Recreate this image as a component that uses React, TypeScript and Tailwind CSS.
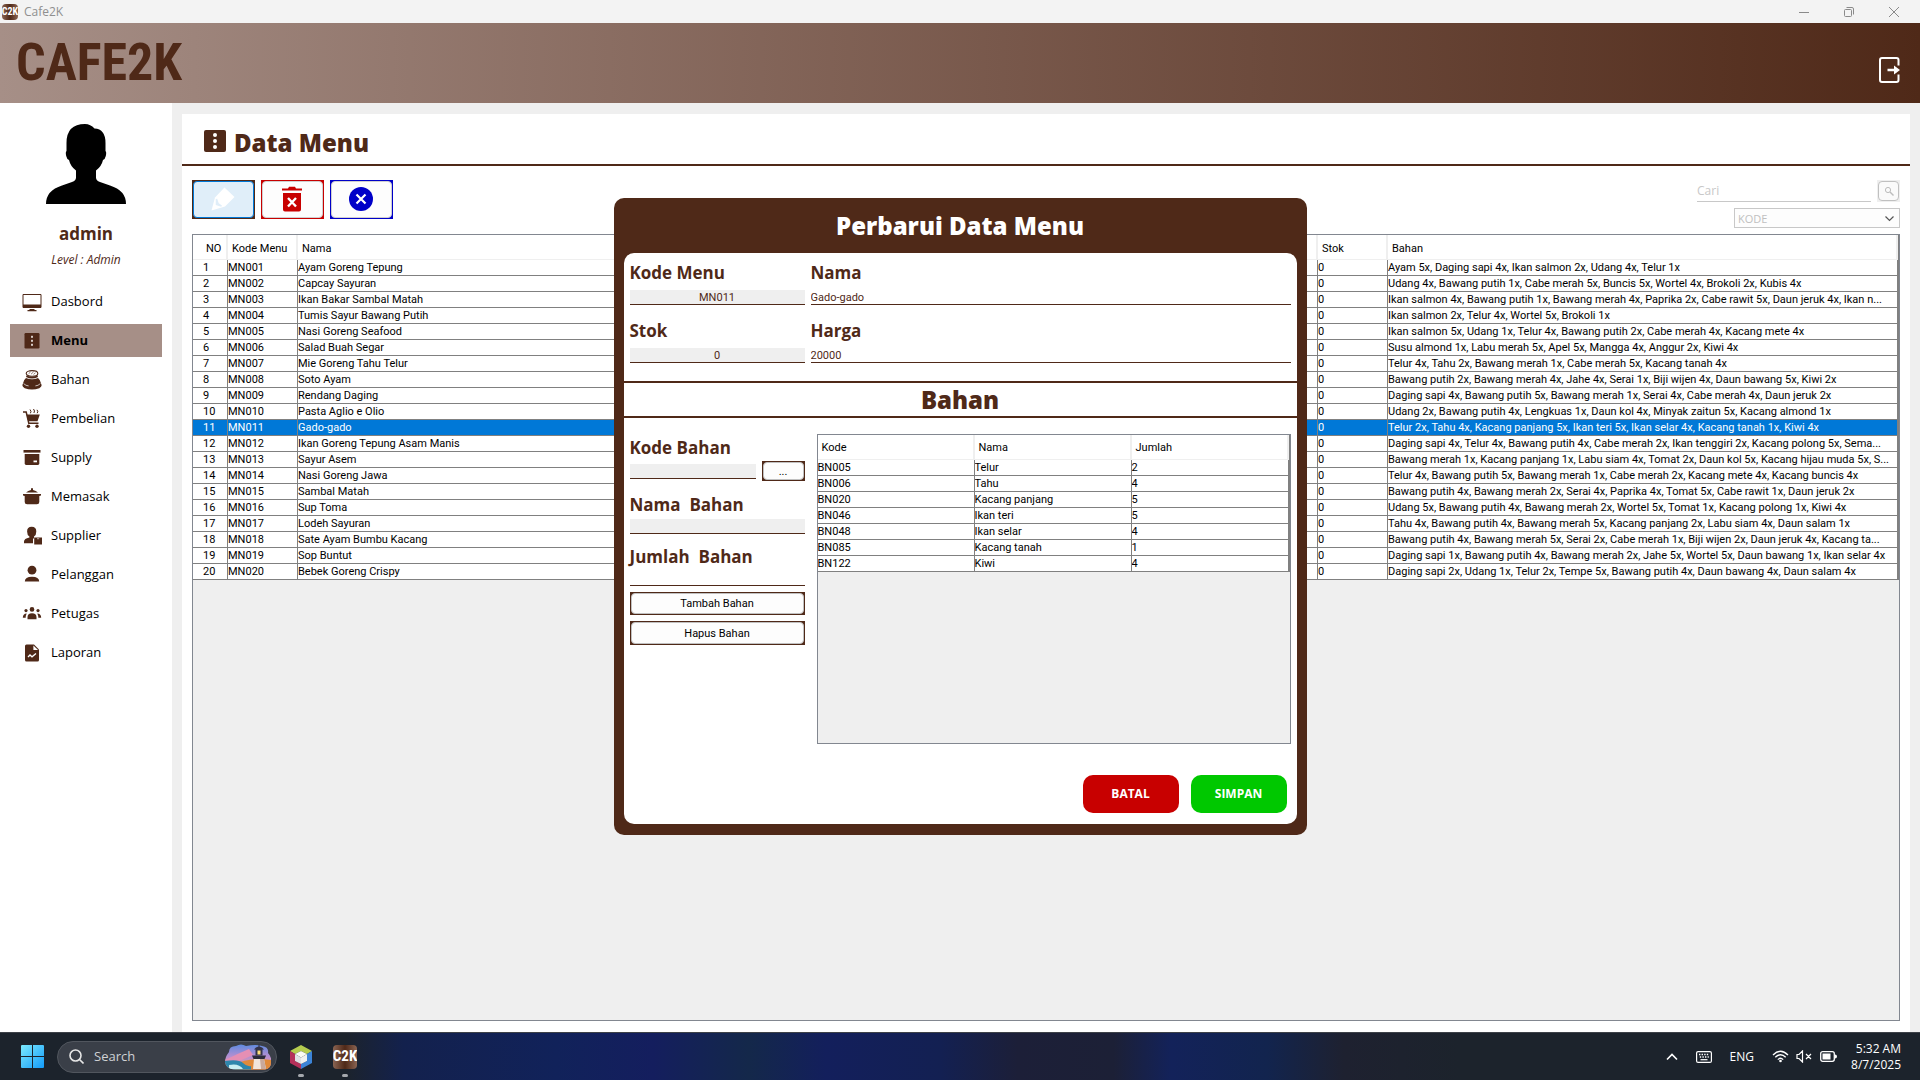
import React from 'react';

const TABLE_FONT = "font-['Roboto','Liberation_Sans',sans-serif]";
const HEAVY_FONT = "font-['Noto_Sans','Open_Sans',sans-serif] font-black";

type Row = [name: string, ingredients: string];

const rows: Row[] = [
  ['Ayam Goreng Tepung', 'Ayam 5x, Daging sapi 4x, Ikan salmon 2x, Udang 4x, Telur 1x'],
  ['Capcay Sayuran', 'Udang 4x, Bawang putih 1x, Cabe merah 5x, Buncis 5x, Wortel 4x, Brokoli 2x, Kubis 4x'],
  ['Ikan Bakar Sambal Matah', 'Ikan salmon 4x, Bawang putih 1x, Bawang merah 4x, Paprika 2x, Cabe rawit 5x, Daun jeruk 4x, Ikan n...'],
  ['Tumis Sayur Bawang Putih', 'Ikan salmon 2x, Telur 4x, Wortel 5x, Brokoli 1x'],
  ['Nasi Goreng Seafood', 'Ikan salmon 5x, Udang 1x, Telur 4x, Bawang putih 2x, Cabe merah 4x, Kacang mete 4x'],
  ['Salad Buah Segar', 'Susu almond 1x, Labu merah 5x, Apel 5x, Mangga 4x, Anggur 2x, Kiwi 4x'],
  ['Mie Goreng Tahu Telur', 'Telur 4x, Tahu 2x, Bawang merah 1x, Cabe merah 5x, Kacang tanah 4x'],
  ['Soto Ayam', 'Bawang putih 2x, Bawang merah 4x, Jahe 4x, Serai 1x, Biji wijen 4x, Daun bawang 5x, Kiwi 2x'],
  ['Rendang Daging', 'Daging sapi 4x, Bawang putih 5x, Bawang merah 1x, Serai 4x, Cabe merah 4x, Daun jeruk 2x'],
  ['Pasta Aglio e Olio', 'Udang 2x, Bawang putih 4x, Lengkuas 1x, Daun kol 4x, Minyak zaitun 5x, Kacang almond 1x'],
  ['Gado-gado', 'Telur 2x, Tahu 4x, Kacang panjang 5x, Ikan teri 5x, Ikan selar 4x, Kacang tanah 1x, Kiwi 4x'],
  ['Ikan Goreng Tepung Asam Manis', 'Daging sapi 4x, Telur 4x, Bawang putih 4x, Cabe merah 2x, Ikan tenggiri 2x, Kacang polong 5x, Sema...'],
  ['Sayur Asem', 'Bawang merah 1x, Kacang panjang 1x, Labu siam 4x, Tomat 2x, Daun kol 5x, Kacang hijau muda 5x, S...'],
  ['Nasi Goreng Jawa', 'Telur 4x, Bawang putih 5x, Bawang merah 1x, Cabe merah 2x, Kacang mete 4x, Kacang buncis 4x'],
  ['Sambal Matah', 'Bawang putih 4x, Bawang merah 2x, Serai 4x, Paprika 4x, Tomat 5x, Cabe rawit 1x, Daun jeruk 2x'],
  ['Sup Toma', 'Udang 5x, Bawang putih 4x, Bawang merah 2x, Wortel 5x, Tomat 1x, Kacang polong 1x, Kiwi 4x'],
  ['Lodeh Sayuran', 'Tahu 4x, Bawang putih 4x, Bawang merah 5x, Kacang panjang 2x, Labu siam 4x, Daun salam 1x'],
  ['Sate Ayam Bumbu Kacang', 'Bawang putih 4x, Bawang merah 5x, Serai 2x, Cabe merah 1x, Biji wijen 2x, Daun jeruk 4x, Kacang ta...'],
  ['Sop Buntut', 'Daging sapi 1x, Bawang putih 4x, Bawang merah 2x, Jahe 5x, Wortel 5x, Daun bawang 1x, Ikan selar 4x'],
  ['Bebek Goreng Crispy', 'Daging sapi 2x, Udang 1x, Telur 2x, Tempe 5x, Bawang putih 4x, Daun bawang 4x, Daun salam 4x'],
];

const bahan = [
  ['BN005', 'Telur', '2'],
  ['BN006', 'Tahu', '4'],
  ['BN020', 'Kacang panjang', '5'],
  ['BN046', 'Ikan teri', '5'],
  ['BN048', 'Ikan selar', '4'],
  ['BN085', 'Kacang tanah', '1'],
  ['BN122', 'Kiwi', '4'],
];

const B = '#4f2918';

/* Sidebar icons, drawn on a 20 by 20 grid */
const icons: Record<string, React.ReactNode> = {
  Dasbord: (
    <>
      <path d="M1 2.5h18v13H1z" fill="none" stroke={B} strokeWidth="1" />
      <path d="M1 12.5h18v3H1zM7.5 17h5v1h2v1.2h-9V18h2z" fill={B} />
    </>
  ),
  Menu: (
    <>
      <rect x="2.5" y="2" width="15" height="15.5" rx="1.2" fill={B} />
      <g fill="#d8cdc8">
        <rect x="9" y="4.8" width="2" height="2" /><rect x="9" y="8.8" width="2" height="2" /><rect x="9" y="12.8" width="2" height="2" />
      </g>
    </>
  ),
  Bahan: (
    <>
      <ellipse cx="10" cy="3.4" rx="5.8" ry="2.8" fill="#fff" stroke={B} strokeWidth="1.1" />
      <path d="M6.500 3.800l2-1.800M9 4.200l2.600-2.400M11.500 4.400l2-1.600" stroke={B} strokeWidth=".6" />
      <path d="M4.600 5.200q5.400 3 10.800 0l.6 1.700q-6 3-12 0z" fill={B} />
      <path d="M4 8q6 2.600 12 0 2.200 2 2.600 4.200L19.600 15q.3 1.800-2.300 3.200-7.300 2.800-14.600 0Q.1 16.800.4 15l1-2.800Q1.800 10 4 8z" fill={B} />
      <path d="M1.600 13.600q2.400 2.300 5 2.300M18.400 13.600q-2.400 2.300-5 2.300" fill="none" stroke="#fff" strokeWidth=".7" />
    </>
  ),
  Pembelian: (
    <>
      <path d="M1 3h3.200l2.600 11.300h9.700" fill="none" stroke={B} strokeWidth="1.5" />
      <path d="M4.500 5.500h13.300l-2.300 6.700H6.200z" fill={B} />
      <path d="M8 .5l1 2-.6 1.800M11.500 0l1 2-.6 2M15 .8l.8 1.800-.6 1.600" fill="none" stroke={B} strokeWidth="1" />
      <circle cx="6.500" cy="17.300" r="1.700" fill={B} /><circle cx="15" cy="17.300" r="1.700" fill={B} />
    </>
  ),
  Supply: (
    <>
      <path d="M1.500 2h17v2.600h-17z" fill={B} />
      <path d="M2.700 6h14.600v9.600q0 1.400-1.400 1.400H4.100q-1.400 0-1.400-1.400z" fill={B} />
      <rect x="11.500" y="12.500" width="3.500" height="1.800" fill="#fff" />
    </>
  ),
  Memasak: (
    <>
      <path d="M4 5.600Q6 3.500 9 3V1.200h2V3q3 .5 5 2.600z" fill={B} />
      <path d="M1 6.900h18v1.500l-1.700.6v6q0 2.300-2.400 2.300H5.100q-2.400 0-2.400-2.300V9L1 8.400z" fill={B} />
    </>
  ),
  Supplier: (
    <>
      <path d="M9.700.8q4.600 0 4.600 4.600 0 3.600-2.300 5v2H11v4.800H2v-1.600q0-2.800 5.400-4V10.400Q5.100 9 5.100 5.400 5.100.8 9.700.8z" fill={B} />
      <path d="M12.200 11.500H20v7h-7.800z" fill={B} /><path d="M15 11.500h2.200v1.800H15z" fill="#a68f87" />
    </>
  ),
  Pelanggan: (
    <>
      <circle cx="10" cy="5.200" r="4.400" fill={B} />
      <path d="M2.800 16.500q0-4.700 7.200-4.700t7.200 4.700z" fill={B} />
    </>
  ),
  Petugas: (
    <g fill={B}>
      <circle cx="10" cy="5.400" r="2.300" /><circle cx="4" cy="6.600" r="1.600" /><circle cx="16" cy="6.600" r="1.600" />
      <path d="M5.500 15.200v-2q0-4 4.500-4t4.500 4v2zM.8 13.800q0-4 3.900-4.200Q3.700 11.500 3.700 13.800zM19.200 13.800q0-4-3.900-4.200 1 1.900 1 4.200z" />
    </g>
  ),
  Laporan: (
    <>
      <path d="M4.500 1.500H12l5 5V17q0 1.500-1.500 1.500h-11Q3 18.500 3 17V3q0-1.500 1.500-1.500z" fill={B} />
      <path d="M11.400 2.500v4.600H16z" fill="#fff" />
      <path d="M6 14l2-2 2 1.800 4-3.300" fill="none" stroke="#fff" strokeWidth="1.300" />
    </>
  ),
};

function TitleBar() {
  return (
    <div className="flex h-[23px] shrink-0 items-center bg-[#f3f3f3] pl-0.5 text-[12px] text-[#8f8f8f]">
      <C2K small />
      <span className="ml-1.5 flex-1">Cafe2K</span>
      <button aria-label="Minimize" className="flex w-[45px] justify-center">
        <svg width="12" height="12" viewBox="0 0 12 12"><path d="M1 6.500h10" stroke="#8a8a8a" /></svg>
      </button>
      <button aria-label="Restore" className="flex w-[45px] justify-center">
        <svg width="12" height="12" viewBox="0 0 12 12" fill="none" stroke="#8a8a8a"><rect x="1.500" y="3.500" width="7" height="7" rx="1" /><path d="M3.500 1.500h5.500q1.500 0 1.500 1.500v5.500" /></svg>
      </button>
      <button aria-label="Close" className="mr-1 flex w-[45px] justify-center">
        <svg width="12" height="12" viewBox="0 0 12 12"><path d="M1 1l10 10M11 1L1 11" stroke="#8a8a8a" /></svg>
      </button>
    </div>
  );
}

function C2K({ small }: { small?: boolean }) {
  return (
    <span
      className={
        "flex items-center justify-center overflow-hidden rounded-sm bg-linear-to-r from-[#8b6553] via-[#4f2918] to-[#8b6553] font-['Roboto_Condensed','Roboto',sans-serif] font-bold text-white " +
        (small ? 'h-4 w-4 text-[10px] leading-none' : 'h-6 w-6 text-[15px] leading-none')
      }
    >
      C2K
    </span>
  );
}

function Sidebar() {
  return (
    <aside className="flex w-[172px] shrink-0 flex-col items-center bg-white pt-[21px] text-[#4f2918]">
      <svg width="80" height="80" viewBox="0 0 80 80">
        <path d="M39 0q5.500 0 9.500 4.500Q59.500 5 59.500 19v8q1.200 1 .3 5-.8 3.500-2.800 4-1.500 6.500-7 10.500v7q0 3 4 4.500l10 3.500q16 5 16 18.500H0q0-13.500 16-18.500l10-3.500q4-1.500 4-4.500v-7Q24.500 42.500 23 36q-2-.5-2.800-4-.9-4 .3-5v-8Q20.500 0 39 0z" fill="#000" />
      </svg>
      <div className="mt-[18px] text-[17px] leading-6 font-bold">admin</div>
      <div className="mt-1 text-[12px] leading-5 italic">Level : Admin</div>
      <nav className="mt-[15px] flex w-full flex-col gap-1.5 px-2.5 text-black">
        {Object.keys(icons).map((n) => (
          <a
            key={n}
            href="#"
            className={'flex h-[33px] items-center gap-[9px] pl-3 text-[13px] ' + (n === 'Menu' ? 'bg-[#a68f87] font-bold' : '')}
          >
            <svg width="20" height="20" viewBox="0 0 20 20">{icons[n]}</svg>
            {n}
          </a>
        ))}
      </nav>
    </aside>
  );
}

function ToolButton({ label, frame, face, children }: { label: string; frame: string; face: string; children: React.ReactNode }) {
  return (
    <button aria-label={label} className={'h-[39px] w-[63px] p-px ' + frame}>
      <span className={'flex h-full items-center justify-center rounded-sm border pr-px pb-px ' + face}>{children}</span>
    </button>
  );
}

function Toolbar() {
  return (
    <div className="mb-1.5 flex items-start gap-1.5">
      <ToolButton label="Ubah" frame="bg-[#4f2918]" face="border-[#0078d7] bg-[#e0eef9]">
        <svg width="26" height="26" viewBox="0 0 26 26">
          <path d="M1.500 24.500L5 11.500 14.500 1.500 24.500 11 15 20.500z" fill="#fff" />
          <path d="M6.500 13v5.500l5 1.500-3.500-2.500z" fill="#e0eef9" stroke="#e0eef9" strokeWidth="1.500" />
        </svg>
      </ToolButton>
      <ToolButton label="Hapus" frame="bg-[#c80000]" face="border-[#d0d0d0] bg-[#fdfdfd]">
        <svg width="20" height="26" viewBox="0 0 20 26">
          <path d="M0 2.500h6L7 .8h6l1 1.700h6v2H0zM1 7h18v16.500q0 2-2 2H3q-2 0-2-2z" fill="#c80000" />
          <path d="M6 12l8 8.500M14 12l-8 8.500" stroke="#fff" strokeWidth="2.400" />
        </svg>
      </ToolButton>
      <ToolButton label="Batal" frame="bg-[#0000c8]" face="border-[#d0d0d0] bg-[#fdfdfd]">
        <svg width="24" height="24" viewBox="0 0 24 24">
          <circle cx="12" cy="12" r="12" fill="#0000c8" />
          <path d="M7.500 7.500l9 9M16.500 7.500l-9 9" stroke="#fff" strokeWidth="2.200" />
        </svg>
      </ToolButton>
      <div className="ml-auto flex flex-col items-end gap-1.5">
        <div className="flex gap-1.5">
          <input
            aria-label="Cari"
            placeholder="Cari"
            disabled
            className="h-[22px] w-[174px] border-b border-[#c8c8c8] text-[12px] placeholder:text-[#c8c8c8]"
          />
          <button aria-label="Cari data" className="h-[22px] w-[23px] bg-[#efefef] p-px">
            <span className="flex h-full items-center justify-center rounded-sm border border-[#c0c0c0] bg-[#fafafa]">
              <svg width="10" height="10" viewBox="0 0 10 10" fill="none" stroke="#bcbcbc"><circle cx="4" cy="4" r="2.600" /><path d="M6 6l3.500 3.500" strokeWidth="1.400" /></svg>
            </span>
          </button>
        </div>
        <div className="relative">
          <select aria-label="Kolom" disabled className="block h-5 w-[166px] appearance-none border border-[#c8c8c8] bg-[#fdfdfd] pt-px pl-[3px] text-[11px] leading-4 text-[#c0c0c0] opacity-100">
            <option>KODE</option>
          </select>
          <svg className="absolute top-2 right-1.5" width="9" height="6" viewBox="0 0 9 6"><path d="M.5 .5l4 4 4-4" fill="none" stroke="#555" strokeWidth="1.200" /></svg>
        </div>
      </div>
    </div>
  );
}

const th = 'overflow-hidden border-r-2 border-b border-[#efefef] pt-0.5 text-left font-normal whitespace-nowrap';
const td = 'overflow-hidden border-r border-b border-[#808080] whitespace-nowrap';

function MenuTable() {
  return (
    <div className="flex-1 border border-[#828790] bg-[#efefef]">
      <table className={'w-full table-fixed border-separate border-spacing-0 border-r border-[#808080] bg-white text-[11px] leading-[15px] text-black ' + TABLE_FONT}>
        <colgroup>
          <col className="w-[35px]" />
          <col className="w-[70px]" />
          <col />
          <col className="w-[70px]" />
          <col className="w-[510px]" />
        </colgroup>
        <thead>
          <tr className="h-[25px]">
            <th className={th + ' pl-[13px]'}>NO</th>
            <th className={th + ' pl-1'}>Kode Menu</th>
            <th className={th + ' pl-1'}>Nama</th>
            <th className={th + ' pl-1'}>Stok</th>
            <th className={th + ' pl-1'}>Bahan</th>
          </tr>
        </thead>
        <tbody>
          {rows.map(([name, text], i) => (
            <tr key={name} className={i === 10 ? 'h-4 bg-[#0078d7] text-white' : 'h-4'}>
              <td className={td + ' pl-2.5'}>{i + 1}</td>
              <td className={td}>{'MN0' + String(i + 1).padStart(2, '0')}</td>
              <td className={td}>{name}</td>
              <td className={td}>0</td>
              <td className={td}>{text}</td>
            </tr>
          ))}
        </tbody>
      </table>
    </div>
  );
}

const label = 'block h-6 text-[17px] leading-6 font-bold whitespace-pre';
const input = 'block h-[15px] w-full border-b border-[#4f2918] pt-px text-[11px] leading-3 ' + TABLE_FONT;

function SmallButton({ size, children, ...rest }: { size: string; children: React.ReactNode; 'aria-label'?: string }) {
  return (
    <button type="button" {...rest} className={'bg-[#4f2918] p-px text-[11px] text-black ' + TABLE_FONT + ' ' + size}>
      <span className="flex h-full items-center justify-center rounded-sm border border-[#c0c0c0] bg-[#fdfdfd] pt-px leading-none">{children}</span>
    </button>
  );
}

function Dialog() {
  return (
    <div className="absolute inset-0 flex items-center justify-center">
      <section role="dialog" aria-labelledby="dialog-title" className="w-[693px] rounded-[10px] bg-[#4f2918] px-2.5 pb-[11px] text-[#4f2918]">
        <h2 id="dialog-title" className={'h-[55px] text-center text-[24px] leading-[56px] text-white ' + HEAVY_FONT}>Perbarui Data Menu</h2>
        <form className="rounded-[10px] bg-white pb-[11px]">
          <div className="grid grid-cols-[175px_1fr] gap-x-1.5 gap-y-3.5 px-1.5 pt-2 pb-[18px]">
            <div>
              <label htmlFor="kode" className={label}>Kode Menu</label>
              <input id="kode" readOnly defaultValue="MN011" className={input + ' mt-[5px] bg-[#efefef] text-center'} />
            </div>
            <div>
              <label htmlFor="nama" className={label}>Nama</label>
              <input id="nama" defaultValue="Gado-gado" className={input + ' mt-[5px]'} />
            </div>
            <div>
              <label htmlFor="stok" className={label}>Stok</label>
              <input id="stok" readOnly defaultValue="0" className={input + ' mt-[5px] bg-[#efefef] text-center'} />
            </div>
            <div>
              <label htmlFor="harga" className={label}>Harga</label>
              <input id="harga" defaultValue="20000" className={input + ' mt-[5px]'} />
            </div>
          </div>
          <h3 className={'h-[37px] border-y-2 border-[#4f2918] text-center text-[24px] leading-[34px] ' + HEAVY_FONT}>Bahan</h3>
          <div className="grid grid-cols-[175px_1fr] gap-x-3 px-1.5 pt-4">
            <div className="pt-0.5">
              <label htmlFor="kodeBahan" className={label}>Kode Bahan</label>
              <div className="mt-px flex items-end gap-1.5">
                <div className="flex-1 pb-0.5">
                  <input id="kodeBahan" readOnly className={input + ' bg-[#efefef]'} />
                </div>
                <SmallButton aria-label="Pilih bahan" size="h-5 w-[43px]">...</SmallButton>
              </div>
              <label htmlFor="namaBahan" className={label + ' mt-3'}>{'Nama  Bahan'}</label>
              <input id="namaBahan" readOnly className={input + ' mt-0.5 bg-[#efefef]'} />
              <label htmlFor="jumlahBahan" className={label + ' mt-[11px]'}>{'Jumlah  Bahan'}</label>
              <input id="jumlahBahan" className={input + ' mt-0.5'} />
              <div className="mt-1.5 flex flex-col gap-1.5">
                <SmallButton size="h-[23px]">Tambah Bahan</SmallButton>
                <SmallButton size="h-6">Hapus Bahan</SmallButton>
              </div>
            </div>
            <div className="h-[310px] border border-[#828790] bg-[#efefef]">
              <table className={'w-full table-fixed border-separate border-spacing-0 border-r border-[#808080] bg-white text-[11px] leading-[15px] text-black ' + TABLE_FONT}>
                <thead>
                  <tr className="h-[25px]">
                    <th className={th + ' pl-1'}>Kode</th>
                    <th className={th + ' pl-1'}>Nama</th>
                    <th className={th + ' pl-1'}>Jumlah</th>
                  </tr>
                </thead>
                <tbody>
                  {bahan.map((r) => (
                    <tr key={r[0]} className="h-4">
                      {r.map((c, i) => <td key={i} className={td}>{c}</td>)}
                    </tr>
                  ))}
                </tbody>
              </table>
            </div>
          </div>
          <div className="mt-[31px] flex justify-end gap-3 px-2.5 text-[12px] font-bold text-white">
            <button type="button" className="h-[38px] w-24 rounded-[10px] bg-[#c80000]">BATAL</button>
            <button type="button" className="h-[38px] w-24 rounded-[10px] bg-[#00c800]">SIMPAN</button>
          </div>
        </form>
      </section>
    </div>
  );
}

function Taskbar() {
  return (
    <footer className="flex h-12 shrink-0 items-center border-t border-[#3d4148] bg-[linear-gradient(90deg,#1c232c_0%,#1c232c_18%,#13214d_21%,#11225a_29%,#141e5e_34%,#14284a_39%,#131f5c_43%,#132052_49%,#1c1f38_53%,#1c2036_58%,#13225a_61%,#12244e_66%,#1e2130_70%,#1c232c_76%)] pr-[19px] pl-[21px] text-white">
      <button aria-label="Start">
        <svg width="23" height="23" viewBox="0 0 23 23">
          <defs><linearGradient id="win" gradientUnits="userSpaceOnUse" x1="0" y1="0" x2="23" y2="23"><stop offset="0" stopColor="#7ceafd" /><stop offset="1" stopColor="#139bfa" /></linearGradient></defs>
          <path d="M0 1q0-1 1-1h10v11H0zM12 0h10q1 0 1 1v10H12zM0 12h11v11H1q-1 0-1-1zM12 12h11v10q0 1-1 1H12z" fill="url(#win)" />
        </svg>
      </button>
      <div className="ml-[13px] flex h-8 w-[220px] items-center rounded-full border border-[#51565e] bg-[#3a3f48] pr-[5px] pl-[11px]">
        <svg width="15" height="15" viewBox="0 0 15 15" fill="none" stroke="#e6e6e6" strokeWidth="1.600"><circle cx="6.500" cy="6.500" r="5.500" /><path d="M10.500 10.500l4 4" /></svg>
        <input aria-label="Search" placeholder="Search" className="ml-2.5 w-0 flex-1 text-[13px] placeholder:text-[#cfd1d4]" />
        <svg width="46" height="26" viewBox="0 0 46 26">
          <defs>
            <linearGradient id="sky" x1="0" y1="0" x2="0" y2="1"><stop offset="0" stopColor="#5b8be0" /><stop offset=".5" stopColor="#b98fd0" /><stop offset="1" stopColor="#f2a184" /></linearGradient>
            <clipPath id="cloud"><path d="M4 8Q4 2 11 2q5-3 10 0 10-2 16 0 7 1 6 7 4 4 3 9 0 7-6 7.500H9Q1 25 0 18q0-5 4-10z" /></clipPath>
          </defs>
          <g clipPath="url(#cloud)">
            <rect width="46" height="26" fill="url(#sky)" />
            <path d="M0 16q12-6 24-11l4 6-16 7z" fill="#e58fb4" />
            <path d="M10 20q14-7 36-4v10H10z" fill="#e08a3a" />
            <path d="M0 17q14-2 18 2t8 3v4H0z" fill="#2d86ac" />
            <path d="M4 21q10-2 14 4H4z" fill="#c8eef2" />
          </g>
          <path d="M29 15h10l2 10H28z" fill="#f2e6dc" /><path d="M35 15h4l2 10h-5z" fill="#c9a99a" />
          <path d="M27 11.500h14l-1.500 3.500h-11z" fill="#2b2b3a" />
          <path d="M30.500 5.500h7v6h-7zM29 5.500q1.500-2.500 4.500-3V0h1v2.500q3 .5 4.500 3z" fill="#33334a" />
          <path d="M32.500 6.500h3v4h-3z" fill="#ffe07a" />
        </svg>
      </div>
      <button aria-label="NetBeans" className="relative ml-[13px] flex h-12 w-[22px] items-center">
        <svg width="22" height="24" viewBox="0 0 22 24">
          <path d="M11 0l11 6-5 3-6-3-6 3-5-3z" fill="#b5cc4f" /><path d="M0 6l5 3v7l6 3v5L0 18z" fill="#b5305a" /><path d="M22 6l-5 3v7l-6 3v5l11-6z" fill="#3c84d8" />
          <path d="M11 6l6 3-6 3.500L5 9z" fill="#fafaf4" /><path d="M5 9l6 3.500V19l-6-3z" fill="#dfe2e4" /><path d="M17 9l-6 3.500V19l6-3z" fill="#f1f1f1" />
        </svg>
        <span className="absolute bottom-1 left-2 h-[3px] w-1.5 rounded-full bg-[#a5a8ad]" />
      </button>
      <button aria-label="Cafe2K" className="relative ml-[21px] flex h-12 w-6 items-center">
        <C2K />
        <span className="absolute bottom-1 left-[9px] h-[3px] w-1.5 rounded-full bg-[#a5a8ad]" />
      </button>
      <div className="ml-auto flex items-center">
        <svg width="12" height="8" viewBox="0 0 12 8" fill="none" stroke="#fff" strokeWidth="1.600"><path d="M1 6.500l5-5 5 5" /></svg>
        <svg className="ml-[18px]" width="16" height="12" viewBox="0 0 16 12">
          <rect x=".6" y=".6" width="14.800" height="10.800" rx="1.500" fill="none" stroke="#fff" strokeWidth="1.200" />
          <path d="M3 3.500h10M3.800 6h9" stroke="#fff" strokeWidth="1.400" strokeDasharray="1.400 1.200" /><path d="M4.500 8.700h7" stroke="#fff" strokeWidth="1.200" />
        </svg>
        <span className="ml-[18px] text-[12px]">ENG</span>
        <svg className="ml-[18px]" width="17" height="13" viewBox="0 0 17 13" fill="none" stroke="#fff" strokeWidth="1.300">
          <path d="M1 5q7.500-7.500 15 0M3.300 7.300q5.200-5.200 10.400 0M5.800 9.600q2.700-2.600 5.400 0" /><circle cx="8.500" cy="11" r="1.300" fill="#fff" stroke="none" />
        </svg>
        <svg className="ml-[7px]" width="16" height="13" viewBox="0 0 16 13" fill="none" stroke="#fff" strokeWidth="1.200">
          <path d="M1 4.500h2L6.500 1v11L3 8.500H1zM10 4l5 5M15 4l-5 5" />
        </svg>
        <svg className="ml-2" width="17" height="11" viewBox="0 0 17 11">
          <rect x=".7" y=".7" width="13.600" height="9.600" rx="2" fill="none" stroke="#fff" strokeWidth="1.300" /><rect x="2.500" y="2.500" width="8" height="6" fill="#fff" /><path d="M15 3.500q2 0 2 2t-2 2z" fill="#fff" />
        </svg>
        <div className="ml-3.5 text-right text-[12px] leading-4">
          <div>5:32 AM</div>
          <div>8/7/2025</div>
        </div>
      </div>
    </footer>
  );
}

export default function App() {
  return (
    <div className="flex min-h-screen flex-col bg-[#efefef] font-['Open_Sans','Noto_Sans',sans-serif]">
      <div className="relative flex flex-1 flex-col">
        <TitleBar />
        <header className="flex h-20 shrink-0 items-center justify-between bg-linear-to-r from-[#a68f87] to-[#4f2918] pr-5 pl-4">
          <h1 className="font-['Roboto_Condensed','Roboto',sans-serif] text-[52px] leading-none font-bold text-[#4f2918]">CAFE2K</h1>
          <button aria-label="Keluar" className="mt-3.5">
            <svg width="21" height="26" viewBox="0 0 21 26">
              <path d="M19.500 8.500V3q0-2-2-2H3Q1 1 1 3v20q0 2 2 2h14.500q2 0 2-2v-5.500" fill="none" stroke="#fff" strokeWidth="2" />
              <path d="M8.500 11.800H15V8.500l6 4.500-6 4.500v-3.300H8.500z" fill="#fff" />
            </svg>
          </button>
        </header>
        <div className="flex flex-1">
          <Sidebar />
          <main className="mt-[11px] mr-2.5 ml-2.5 flex min-w-0 flex-1 flex-col bg-white">
            <h2 className={'flex h-[52px] items-center gap-2 border-b-2 border-[#4f2918] pt-2 pl-[22px] text-[24px] text-[#4f2918] ' + HEAVY_FONT}>
              <svg className="mb-1" width="22" height="22" viewBox="0 0 22 22">
                <rect width="22" height="22" rx="2" fill={B} /><g fill="#fff"><circle cx="11" cy="5" r="2" /><circle cx="11" cy="11" r="2" /><circle cx="11" cy="17" r="2" /></g>
              </svg>
              Data Menu
            </h2>
            <div className="flex flex-1 flex-col px-2.5 pt-3.5 pb-[11px]">
              <Toolbar />
              <MenuTable />
            </div>
          </main>
        </div>
        <Dialog />
      </div>
      <Taskbar />
    </div>
  );
}
